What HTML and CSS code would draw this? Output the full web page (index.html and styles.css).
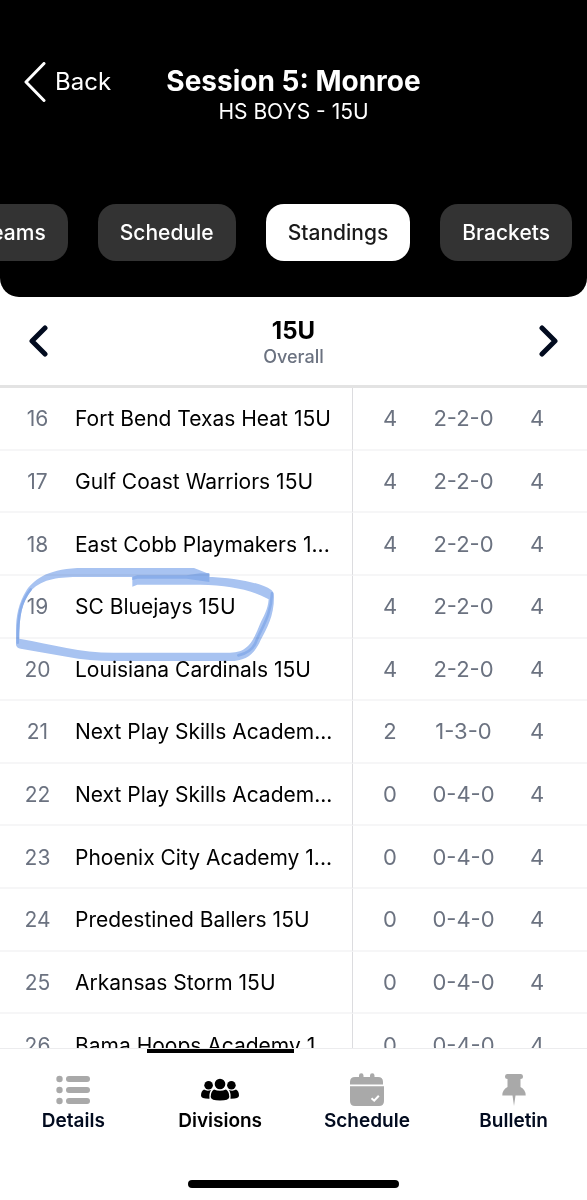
FILE: index.html
```html
<!DOCTYPE html>
<html lang="en">
<head>
  <meta charset="UTF-8" />
  <meta name="viewport" content="width=device-width, initial-scale=1.0" />
  <title>Session 5: Monroe - Standings</title>
  <link rel="stylesheet" href="styles.css">
</head>
<body>

  <header class="top">
    <div class="title-bar">
      <a href="#" class="back">
        <svg width="22" height="40" viewBox="0 0 22 40"><path d="M20 1.500L2 20l18 18.500" /></svg>
        Back
      </a>
      <div class="title">
        <h1>Session 5: Monroe</h1>
        <p>HS BOYS - 15U</p>
      </div>
    </div>
    <nav class="pills">
      <button>Teams</button>
      <button>Schedule</button>
      <button class="active">Standings</button>
      <button>Brackets</button>
    </nav>
  </header>

  <section class="division">
    <button aria-label="Previous division">
      <svg width="20" height="34" viewBox="0 0 20 34"><path d="M17 4L4 17l13 13" /></svg>
    </button>
    <div class="division-name">
      <h2>15U</h2>
      <p>Overall</p>
    </div>
    <button aria-label="Next division">
      <svg width="20" height="34" viewBox="0 0 20 34"><path d="M3 4l13 13L3 30" /></svg>
    </button>
  </section>

  <main class="standings">
    <table>
      <tbody>
        <tr><td class="rank">16</td><td class="team">Fort Bend Texas Heat 15U</td><td class="pts">4</td><td class="record">2-2-0</td><td class="games">4</td></tr>
        <tr><td class="rank">17</td><td class="team">Gulf Coast Warriors 15U</td><td class="pts">4</td><td class="record">2-2-0</td><td class="games">4</td></tr>
        <tr><td class="rank">18</td><td class="team">East Cobb Playmakers 1...</td><td class="pts">4</td><td class="record">2-2-0</td><td class="games">4</td></tr>
        <tr><td class="rank">19</td><td class="team">SC Bluejays 15U</td><td class="pts">4</td><td class="record">2-2-0</td><td class="games">4</td></tr>
        <tr><td class="rank">20</td><td class="team">Louisiana Cardinals 15U</td><td class="pts">4</td><td class="record">2-2-0</td><td class="games">4</td></tr>
        <tr><td class="rank">21</td><td class="team">Next Play Skills Academ...</td><td class="pts">2</td><td class="record">1-3-0</td><td class="games">4</td></tr>
        <tr><td class="rank">22</td><td class="team">Next Play Skills Academ...</td><td class="pts">0</td><td class="record">0-4-0</td><td class="games">4</td></tr>
        <tr><td class="rank">23</td><td class="team">Phoenix City Academy 1...</td><td class="pts">0</td><td class="record">0-4-0</td><td class="games">4</td></tr>
        <tr><td class="rank">24</td><td class="team">Predestined Ballers 15U</td><td class="pts">0</td><td class="record">0-4-0</td><td class="games">4</td></tr>
        <tr><td class="rank">25</td><td class="team">Arkansas Storm 15U</td><td class="pts">0</td><td class="record">0-4-0</td><td class="games">4</td></tr>
        <tr><td class="rank">26</td><td class="team">Bama Hoops Academy 1...</td><td class="pts">0</td><td class="record">0-4-0</td><td class="games">4</td></tr>
      </tbody>
    </table>

    <!-- highlighter circle around the team -->
    <svg class="marker" width="268" height="100" viewBox="36 12 804 300">
      <path class="ink" d="M628 68V42L582 24H250C150 24 105 55 80 90C55 130 48 170 48 210V255Q50 264 62 266L200 290Q270 303 340 303H690C740 303 765 280 782 240C800 205 822 170 822 110Q822 96 814 90C780 66 700 54 628 50H397V80L412 74H600C690 76 750 88 806 118C804 150 790 170 780 192C762 235 748 278 690 278H340C240 278 160 254 58 236C58 170 65 130 88 98C120 58 170 52 230 51H390L600 60Z" />
      <path class="overlap" d="M397 50L412 46H560L600 40H628V66L560 56H412L397 60Z" />
      <path class="edge" d="M92 88C62 125 53 165 53 248" />
      <path class="edge" d="M816 100C814 170 780 210 766 250Q752 278 715 286" />
    </svg>
  </main>

  <nav class="tabs">
    <a href="#">
      <svg width="36" height="34" viewBox="0 0 36 34">
        <circle cx="4.500" cy="6" r="3.200" /><rect x="11" y="3" width="24" height="6" rx="3" />
        <circle cx="4.500" cy="17" r="3.200" /><rect x="11" y="14" width="24" height="6" rx="3" />
        <circle cx="4.500" cy="28" r="3.200" /><rect x="11" y="25" width="24" height="6" rx="3" />
      </svg>
      Details
    </a>
    <a href="#" class="active">
      <svg width="40" height="34" viewBox="0 0 40 34">
        <circle cx="20" cy="11" r="5.300" />
        <circle cx="8.600" cy="12.300" r="4.300" />
        <circle cx="31.400" cy="12.300" r="4.300" />
        <path d="M14 16.500Q20 19 26 16.500Q29.300 18.500 29.300 24Q29 27.500 20 27.500Q11 27.500 10.700 24Q10.700 18.500 14 16.500Z" />
        <path d="M4 16.500Q7 18.500 11 17Q9 20 9.500 25.700Q1 25.800 1 22.500Q1 18 4 16.500Z" />
        <path d="M36 16.500Q33 18.500 29 17Q31 20 30.500 25.700Q39 25.800 39 22.500Q39 18 36 16.500Z" />
      </svg>
      Divisions
    </a>
    <a href="#">
      <svg width="36" height="34" viewBox="0 0 36 34">
        <path d="M10 4V2.500a2 2 0 0 1 4.500 0V4H21V2.500a2 2 0 0 1 4.500 0V4H29Q34 4 34 9V11.500H1V9Q1 4 6 4Z" />
        <path d="M1 13.200H35V28Q35 33 30 33H6Q1 33 1 28Z" />
        <path class="check" d="M22.500 25.200l2.700 2.500 4.600-5" />
      </svg>
      Schedule
    </a>
    <a href="#">
      <svg width="26" height="34" viewBox="0 0 26 34">
        <path d="M6 1H20Q22 1 22 3.500Q22 6 19.500 6V14Q24.700 16.500 24.700 22.500H14.500L13 33L11.500 22.500H1.300Q1.300 16.500 6.500 14V6Q4 6 4 3.500Q4 1 6 1Z" />
      </svg>
      Bulletin
    </a>
  </nav>
  <div class="home-bar"></div>

</body>
</html>
```
FILE: styles.css
```css
* {
  box-sizing: border-box;
}

body {
  margin: 0;
  height: 100vh;
  display: flex;
  flex-direction: column;
  overflow: hidden;
  background: #fff;
  color: #000;
  font-family: Inter, "Liberation Sans", sans-serif;
}

h1, h2, p {
  margin: 0;
}

button {
  border: none;
  padding: 0;
  background: none;
  font-family: inherit;
  cursor: pointer;
}

a {
  text-decoration: none;
}

.top {
  background: #000;
  color: #fff;
  padding: 62px 0 36px;
  border-radius: 0 0 19px 19px;
}

.title-bar {
  display: grid;
  grid-template-columns: 1fr auto 1fr;
  align-items: start;
  padding: 0 24px;
}

.back {
  display: flex;
  align-items: center;
  gap: 9px;
  color: #fff;
  font-size: 24px;
  line-height: 40px;
}

.back svg {
  fill: none;
  stroke: #fff;
  stroke-width: 3;
  stroke-linecap: round;
  stroke-linejoin: round;
}

.title {
  text-align: center;
}

.title h1 {
  font-size: 28px;
  line-height: 38px;
  font-weight: 700;
}

.title p {
  font-size: 21px;
  line-height: 24px;
}

.pills {
  display: flex;
  justify-content: flex-end;
  gap: 30px;
  margin-top: 80px;
  padding-right: 15px;
}

.pills button {
  flex: none;
  padding: 0 22px;
  border-radius: 18px;
  background: #333;
  color: #fff;
  font-size: 21px;
  font-weight: 500;
  line-height: 57px;
}

.pills .active {
  background: #fff;
  color: #1a1a1a;
}

.division {
  display: flex;
  align-items: center;
  justify-content: space-between;
  height: 91px;
  padding: 0 28px;
  border-bottom: 3px solid #e3e3e3;
}

.division svg {
  display: block;
  fill: none;
  stroke: #020b1f;
  stroke-width: 5;
  stroke-linecap: round;
  stroke-linejoin: round;
}

.division-name {
  padding-top: 4px;
  text-align: center;
}

.division-name h2 {
  font-size: 24px;
  line-height: 28px;
  font-weight: 700;
}

.division-name p {
  color: #6b7280;
  font-size: 18px;
  line-height: 24px;
  font-weight: 500;
}

.standings {
  position: relative;
  flex: 1;
  min-height: 0;
  overflow: hidden;
}

table {
  width: 100%;
  height: 689px;
  table-layout: fixed;
  border-collapse: separate;
  border-spacing: 0;
}

td {
  padding: 0;
  border-bottom: 2px solid #f6f6f7;
  color: #6b7280;
  font-size: 22px;
  line-height: 28px;
  text-align: center;
  white-space: nowrap;
}

.rank {
  width: 75px;
  padding-top: 2px;
  font-size: 21px;
}

.team {
  padding-top: 2px;
  border-right: 1px solid #dcdcdf;
  color: #000;
  font-size: 21px;
  text-align: left;
}

.pts {
  width: 74px;
}

.record {
  width: 73px;
}

.games {
  width: 87px;
  padding-right: 13px;
}

.marker {
  position: absolute;
  top: 176px;
  left: 12px;
  mix-blend-mode: multiply;
  pointer-events: none;
}

.marker .ink {
  fill: #a8c3f1;
}

.marker .overlap {
  fill: #8aaeea;
}

.marker .edge {
  fill: none;
  stroke: #8aaeea;
  stroke-width: 8;
  stroke-linecap: round;
}

.tabs {
  display: grid;
  grid-template-columns: repeat(4, 1fr);
  height: 98px;
  border-top: 1px solid #ececee;
}

.tabs a {
  display: flex;
  flex-direction: column;
  align-items: center;
  padding-top: 20px;
  border-top: 4px solid transparent;
  color: #020b1f;
  font-size: 19px;
  line-height: 28px;
  font-weight: 600;
}

.tabs svg {
  fill: #a9a9a9;
}

.tabs .check {
  fill: none;
  stroke: #fff;
  stroke-width: 2;
}

.tabs .active {
  border-top-color: #000;
  color: #000;
}

.tabs .active svg {
  fill: #000;
}

.home-bar {
  width: 36%;
  height: 8px;
  margin: 34px auto 12px;
  border-radius: 4px;
  background: #000;
}
```
